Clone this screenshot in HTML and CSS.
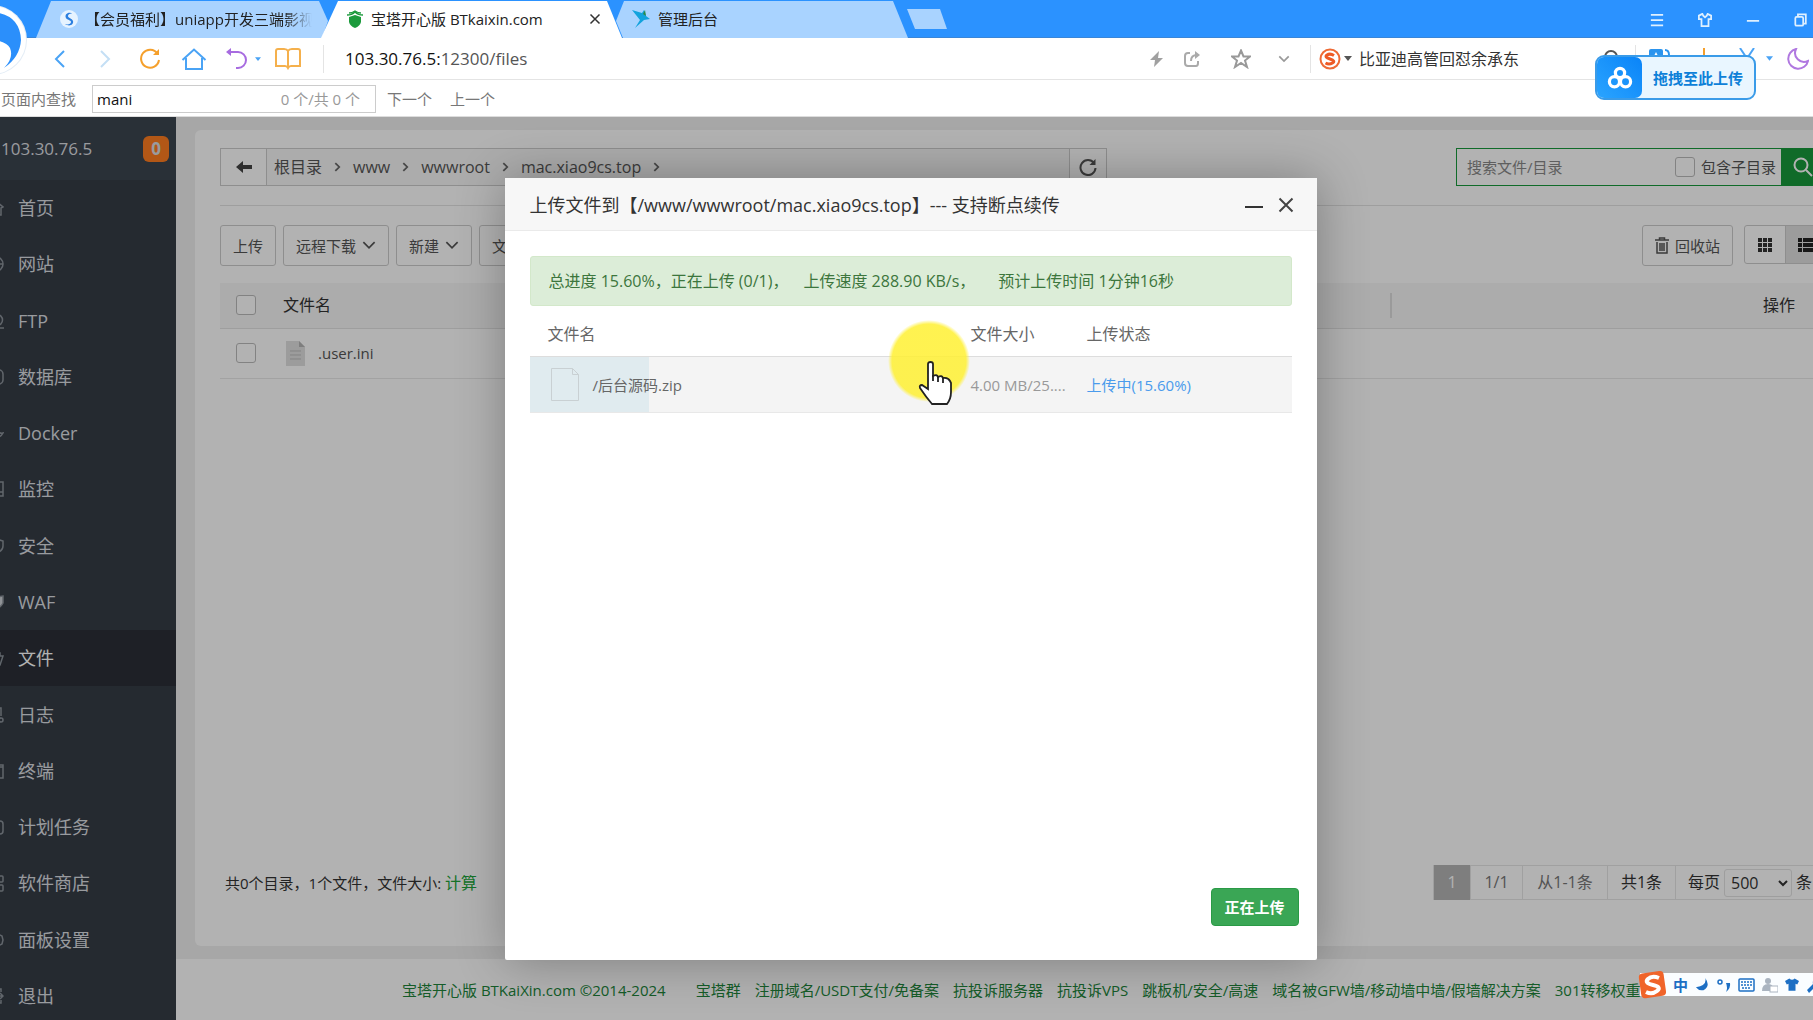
FILE: index.html
```html
<!DOCTYPE html>
<html lang="zh-CN">
<head>
<meta charset="utf-8">
<title>宝塔开心版 BTkaixin.com</title>
<link rel="stylesheet" href="styles.css">
</head>
<body>
<header class="browser">
  <div class="tabs">
    <div class="tab tab-first">
      <svg class="fav" viewBox="0 0 18 18"><circle cx="9" cy="9" r="9" fill="#e6f3ff"/><path d="M13 4C9 1 4 4 6 8c1 2 5 2 5 4s-3 3-6 2c4 3 9 1 8-3-1-3-5-3-5-5 0-2 3-3 5-2z" fill="#2b7fe0"/></svg>
      <span class="tab-title fade">【会员福利】uniapp开发三端影视</span>
    </div>
    <div class="tab tab-active">
      <svg class="fav" viewBox="0 0 18 18"><path d="M3 7l6-2 6 2v5q-1 4-6 6-5-2-6-6z" fill="#1c9a3c"/><path d="M1 5q5 0 8-3 3 3 8 3M3 3q3 0 6-2 3 2 6 2" fill="none" stroke="#1c9a3c" stroke-width="1.3"/></svg>
      <span class="tab-title">宝塔开心版 BTkaixin.com</span>
      <button class="icon-btn" aria-label="关闭标签"><svg width="12" height="12" viewBox="0 0 12 12"><path d="M1.500 1.500l9 9M10.500 1.500l-9 9" stroke="#333" stroke-width="1.500"/></svg></button>
    </div>
    <div class="tab tab-last">
      <svg class="fav wide" viewBox="0 0 20 20"><path d="M1 1l10 3 2-3 2 6 4 3-6 1-9 8 5-8z" fill="#12a3dd"/><path d="M12 5l2-4 1 6z" fill="#2a8a4a"/></svg>
      <span class="tab-title">管理后台</span>
    </div>
    <button class="new-tab" aria-label="新标签"></button>
    <div class="window-tools">
      <svg width="16" height="16" viewBox="0 0 16 16"><path d="M1 2h14M1 8h14M1 14h14"/></svg>
      <svg width="16" height="16" viewBox="0 0 16 16"><path d="M5 1L1 3v4h3v8h8V7h3V3l-4-2-1 2-2 2-2-2z"/></svg>
      <svg width="16" height="16" viewBox="0 0 16 16"><path d="M1 9h14"/></svg>
      <svg width="16" height="16" viewBox="0 0 16 16"><rect x="1.500" y="4.500" width="9" height="10" rx="1.500"/><path d="M4.500 4V1.500h9V12H11"/></svg>
    </div>
  </div>
  <div class="address">
    <div class="nav-icons">
      <svg width="12" height="20" viewBox="0 0 12 20" stroke="#4aa3f5"><path d="M10 2L2 10l8 8"/></svg>
      <svg width="12" height="20" viewBox="0 0 12 20" stroke="#c4dff5"><path d="M2 2l8 8-8 8"/></svg>
      <svg width="22" height="22" viewBox="0 0 22 22" stroke="#f5a02c"><path d="M18.500 5.500A9 9 0 1 0 20 12"/><path d="M20 1v6h-6z" fill="#f5a02c" stroke="none"/></svg>
      <svg width="26" height="22" viewBox="0 0 26 22" stroke="#4aa3f5"><path d="M1.500 12L13 1.500 24.500 12M5 10v11h16V10"/></svg>
      <svg width="22" height="22" viewBox="0 0 22 22" stroke="#a76be0"><path d="M5 4h8a8 8 0 0 1 0 16h-2"/><path d="M1 4l5-4v8z" fill="#a76be0" stroke="none"/></svg>
      <svg width="6" height="4" viewBox="0 0 8 5"><path d="M0 0h8L4 5z" fill="#4aa3f5"/></svg>
      <svg width="26" height="22" viewBox="0 0 26 22" stroke="#f5b04c"><path d="M13 3v17M13 3q-1-2-4-2H3q-2 0-2 2v15h9q2 0 3 2 1-2 3-2h9V3q0-2-2-2h-6q-3 0-4 2z"/></svg>
    </div>
    <div class="url"><span class="host">103.30.76.5:</span>12300/files</div>
    <div class="url-tools">
      <svg width="16" height="16" viewBox="0 0 16 16"><path d="M10 0L1 9h5l-1 7 9-9H9z" fill="#a0a0a0"/></svg>
      <svg width="16" height="16" viewBox="0 0 16 16" stroke="#aaa"><path d="M6 2H4Q1 2 1 5v7q0 3 3 3h8q2 0 2-3v-2M7 10q0-6 6-6"/><path d="M11 0l5 4-5 4z" fill="#aaa" stroke="none"/></svg>
      <svg class="star" width="20" height="20" viewBox="0 0 20 20" stroke="#999"><path d="M10 1.500l2.500 6h6.500l-5 4 2 6.500-6-4-6 4 2-6.500-5-4h6.500z"/></svg>
      <svg width="12" height="8" viewBox="0 0 14 9" stroke="#999"><path d="M1.500 1.500L7 7l5.500-5.500"/></svg>
    </div>
    <div class="search">
      <svg width="22" height="22" viewBox="0 0 22 22" fill="none"><circle cx="11" cy="11" r="9.500" stroke="#ee6a35"/><path d="M15 7.500Q11 5 8 7t3 4 2.500 4T6.500 15" stroke="#ee5a25" class="thick"/></svg>
      <svg width="8" height="5" viewBox="0 0 8 5"><path d="M0 0h8L4 5z" fill="#555"/></svg>
      <input class="search-input" type="text" value="比亚迪高管回怼余承东" aria-label="搜索">
      <svg width="20" height="20" viewBox="0 0 20 20" stroke="#555"><circle cx="8" cy="8" r="6"/><path d="M12 12l6 6"/></svg>
    </div>
    <div class="ext">
      <svg width="24" height="22" viewBox="0 0 24 22"><rect x="1" y="1" width="14" height="14" rx="2" fill="#2b94ee"/><path d="M8 4l-3 6h6z" fill="#fff"/><path d="M17 2q4 0 4 5v8" stroke="#2b94ee"/></svg>
      <svg width="18" height="22" viewBox="0 0 18 22" stroke="#f5a02c"><path d="M9 0v16M3 11l6 6 6-6"/></svg>
      <svg width="18" height="22" viewBox="0 0 18 22" stroke="#4aa3f5"><path d="M2 0l12 18M16 0L4 18"/></svg>
      <svg width="7" height="5" viewBox="0 0 8 5"><path d="M0 0h8L4 5z" fill="#4aa3f5"/></svg>
      <svg width="22" height="22" viewBox="0 0 22 22" stroke="#b078e0"><path d="M9 1A10 10 0 1 0 21 13 9 9 0 0 1 9 1z"/></svg>
    </div>
  </div>
  <div class="find">
    <label class="find-label" for="find-box">页面内查找</label>
    <div class="find-box"><input id="find-box" type="text" value="mani"><span class="find-count">0 个/共 0 个</span></div>
    <button class="find-btn">下一个</button>
    <button class="find-btn">上一个</button>
  </div>
  <svg class="logo" width="28" height="74" viewBox="0 0 28 74"><circle cx="-8" cy="40" r="35" fill="#e4edf6"/><circle cx="-8" cy="40" r="34" fill="#fff"/><path d="M-8 12Q20 14 21 40q-1 17-17 28Q14 58 10 48 6 41 -8 40z" fill="#2b8ffb"/></svg>
  <div class="drop-upload">
    <span class="drop-icon"><svg width="26" height="24" viewBox="0 0 28 26" fill="none" stroke="#fff" stroke-width="3.500"><circle cx="14" cy="7.500" r="5"/><circle cx="8" cy="17" r="5.500"/><circle cx="20" cy="17" r="5.500"/></svg></span>
    <span class="drop-text">拖拽至此上传</span>
  </div>
</header>

<div class="app">
  <div class="layout">
    <aside class="sidebar">
      <div class="side-head"><span>103.30.76.5</span><b class="badge">0</b></div>
      <nav class="menu">
        <a href="#"><svg viewBox="0 0 16 16"><path d="M1 7l7-6 7 6-2 1v7H3V8"/></svg>首页</a>
        <a href="#"><svg viewBox="0 0 16 16"><circle cx="8" cy="8" r="7"/><path d="M1 8h14"/></svg>网站</a>
        <a href="#"><svg viewBox="0 0 16 16"><circle cx="9" cy="7" r="5.500"/><path d="M2 15h14"/></svg>FTP</a>
        <a href="#"><svg viewBox="0 0 16 16"><rect x="2" y="1" width="13" height="14" rx="4"/><path d="M11 3v11"/></svg>数据库</a>
        <a href="#"><svg viewBox="0 0 16 16"><path d="M10 5q1 4 5 3-2 4-6 4"/></svg>Docker</a>
        <a href="#"><svg viewBox="0 0 16 16"><path d="M1 1h14v14H1M15 11H9"/></svg>监控</a>
        <a href="#"><svg viewBox="0 0 16 16"><path d="M8 1l7 2v5q0 5-7 7-7-2-7-7V3z"/></svg>安全</a>
        <a href="#"><svg viewBox="0 0 16 16"><path d="M8 3l7-1v7q-2 4-7 6z" fill="#cfd3d8"/></svg>WAF</a>
        <a href="#" class="on"><svg viewBox="0 0 16 16"><path d="M1 3h11v3h3l-3 9H1"/></svg>文件</a>
        <a href="#"><svg viewBox="0 0 16 16"><path d="M2 1h11v8M2 15h8"/><circle cx="13" cy="13" r="2"/></svg>日志</a>
        <a href="#"><svg viewBox="0 0 16 16"><path d="M1 2h14v13H1M1 4h14"/></svg>终端</a>
        <a href="#"><svg viewBox="0 0 16 16"><rect x="1" y="2" width="14" height="13" rx="3"/></svg>计划任务</a>
        <a href="#"><svg viewBox="0 0 16 16"><rect x="9" y="1" width="6" height="6" rx="1"/><rect x="9" y="10" width="6" height="6" rx="1"/></svg>软件商店</a>
        <a href="#"><svg viewBox="0 0 16 16"><path d="M8 1l6 3 1 4-1 4-6 3-6-3V4z"/></svg>面板设置</a>
        <a href="#"><svg viewBox="0 0 16 16"><path d="M8 1h5v3M8 15h5v-3M6 8h9M12 5l3 3-3 3"/></svg>退出</a>
      </nav>
    </aside>
    <main class="main">
      <section class="card">
        <div class="path-row">
          <div class="path">
            <button class="path-btn back" aria-label="返回"><svg width="16" height="14" viewBox="0 0 16 14"><path d="M0 7l7-6v4h9v4H7v4z" fill="#444"/></svg></button>
            <div class="crumbs">
              <a href="#">根目录</a><svg viewBox="0 0 8 12"><path d="M1.500 1.500L6 6l-4.500 4.500"/></svg>
              <a href="#">www</a><svg viewBox="0 0 8 12"><path d="M1.500 1.500L6 6l-4.500 4.500"/></svg>
              <a href="#">wwwroot</a><svg viewBox="0 0 8 12"><path d="M1.500 1.500L6 6l-4.500 4.500"/></svg>
              <a href="#">mac.xiao9cs.top</a><svg viewBox="0 0 8 12"><path d="M1.500 1.500L6 6l-4.500 4.500"/></svg>
            </div>
            <button class="path-btn reload" aria-label="刷新"><svg width="18" height="18" viewBox="0 0 18 18" fill="none"><path d="M15 5a7.500 7.500 0 1 0 1.500 5" stroke="#555" stroke-width="2"/><path d="M16.500 1v6h-6z" fill="#555"/></svg></button>
          </div>
          <div class="file-search">
            <input type="text" placeholder="搜索文件/目录" aria-label="搜索文件/目录">
            <label><input type="checkbox" class="box">包含子目录</label>
            <button aria-label="搜索"><svg width="20" height="20" viewBox="0 0 20 20" fill="none" stroke="#fff" stroke-width="2"><circle cx="8" cy="8" r="6.500"/><path d="M13 13l6 6"/></svg></button>
          </div>
        </div>
        <div class="tools">
          <button class="btn">上传</button>
          <button class="btn">远程下载<svg width="14" height="9" viewBox="0 0 12 8"><path d="M1 1l5 5 5-5"/></svg></button>
          <button class="btn">新建<svg width="14" height="9" viewBox="0 0 12 8"><path d="M1 1l5 5 5-5"/></svg></button>
          <button class="btn">文件操作</button>
          <button class="btn bin"><svg width="14" height="17" viewBox="0 0 14 17"><path d="M0 3h14M4.500 3V1h5v2M2 5v11h10V5M5 6v8M7 6v8M9 6v8"/></svg>回收站</button>
          <div class="views">
            <button aria-label="图标"><svg width="14" height="14" viewBox="0 0 14 14" fill="#333"><path d="M0 0h4v4H0zM5 0h4v4H5zM10 0h4v4h-4zM0 5h4v4H0zM5 5h4v4H5zM10 5h4v4h-4zM0 10h4v4H0zM5 10h4v4H5zM10 10h4v4h-4z"/></svg></button>
            <button class="on" aria-label="列表"><svg width="16" height="14" viewBox="0 0 16 14" fill="#222"><path d="M0 0h4v4H0zM5 0h11v4H5zM0 5h4v4H0zM5 5h11v4H5zM0 10h4v4H0zM5 10h11v4H5z"/></svg></button>
          </div>
        </div>
        <table class="files">
          <thead><tr><th class="c-check"><input type="checkbox" class="box" aria-label="全选"></th><th>文件名</th><th class="c-op"><span>操作</span></th></tr></thead>
          <tbody><tr><td class="c-check"><input type="checkbox" class="box" aria-label="选择 .user.ini"></td><td><span class="file"><svg width="19" height="25" viewBox="0 0 19 25"><path d="M0 0h13l6 6v19H0z" fill="#e0e0e0"/><path d="M13 0l6 6h-6z" fill="#b5b5b5"/><path d="M4 10h11M4 14h11M4 18h11" stroke="#bbb"/></svg>.user.ini</span></td><td></td></tr></tbody>
        </table>
        <div class="card-foot">
          <p>共0个目录，1个文件，文件大小: <a href="#">计算</a></p>
          <div class="pager">
            <span class="cur">1</span><span>1/1</span><span>从1-1条</span><span class="dark">共1条</span>
            <label class="dark">每页<select><option>500</option></select>条</label>
          </div>
        </div>
      </section>
      <footer class="foot">
        <a href="#" class="copy">宝塔开心版 BTKaiXin.com ©2014-2024</a>
        <a href="#">宝塔群</a><a href="#">注册域名/USDT支付/免备案</a><a href="#">抗投诉服务器</a><a href="#">抗投诉VPS</a><a href="#">跳板机/安全/高速</a><a href="#">域名被GFW墙/移动墙中墙/假墙解决方案</a><a href="#">301转移权重</a>
      </footer>
    </main>
  </div>

  <div class="shade">
    <section class="dialog" role="dialog" aria-label="上传文件">
      <header class="dialog-head">
        <h2>上传文件到【/www/wwwroot/mac.xiao9cs.top】--- 支持断点续传</h2>
        <button class="icon-btn" aria-label="最小化"><svg width="18" height="16" viewBox="0 0 18 16"><path d="M0 10h18" stroke="#333" stroke-width="2"/></svg></button>
        <button class="icon-btn" aria-label="关闭"><svg width="16" height="16" viewBox="0 0 16 16"><path d="M1.500 1.500l13 13M14.500 1.500l-13 13" stroke="#444" stroke-width="2"/></svg></button>
      </header>
      <div class="dialog-body">
        <div class="notice"><span>总进度 15.60%，正在上传 (0/1)，</span><span>上传速度 288.90 KB/s，</span><span>预计上传时间 1分钟16秒</span></div>
        <table class="queue">
          <thead><tr><th>文件名</th><th class="q-size">文件大小</th><th class="q-state">上传状态</th></tr></thead>
          <tbody><tr class="uploading" style="--done: 15.6%"><td><span class="q-file"><svg width="28" height="33" viewBox="0 0 28 33" fill="none" stroke="#c9d0d3"><path d="M.5.5h21l6 6v26H.5zM21.500.5v6h6"/></svg>/后台源码.zip</span></td><td class="q-size">4.00 MB/25....</td><td class="q-state">上传中(15.60%)</td></tr></tbody>
        </table>
      </div>
      <footer class="dialog-foot"><button class="primary">正在上传</button></footer>
    </section>
  </div>
</div>

<div class="pointer"><svg width="34" height="44" viewBox="0 0 34 44"><path d="M10 3q0-2 2.500-2T15 3v12q4-2 5 1 4-2 5 1 5-1 7 3l1 2v9q0 7-4 12H14Q8 36 2 27q-1-3 2-3l6 4z" fill="#fff" stroke="#222" stroke-width="1.800"/><path d="M15 14v6M20 15v6M25 16v6" stroke="#222" stroke-width="1.800"/></svg></div>

<div class="ime">
  <svg class="ime-logo" width="30" height="30" viewBox="0 0 30 30"><rect x="2" y="2" width="25" height="25" rx="4" fill="#f0642a" transform="rotate(-8 15 15)"/><path d="M21 8Q14 5 10 9t5 6 4 6-11 1" fill="none" stroke="#fff" stroke-width="4"/></svg>
  <b>中</b>
  <svg width="15" height="15" viewBox="0 0 16 16"><path d="M11 1q2 8-10 10 3 4 8 3 8-4 2-13z" fill="#1d6fc4"/></svg>
  <svg width="14" height="16" viewBox="0 0 14 16"><circle cx="3" cy="5" r="2" fill="none" stroke="#1d6fc4" stroke-width="1.500"/><path d="M9 6h4q1 5-4 9 2-4 0-9z" fill="#1d6fc4"/></svg>
  <svg width="17" height="14" viewBox="0 0 17 14"><rect x="1" y="1" width="15" height="12" rx="1" fill="none" stroke="#1d6fc4" stroke-width="1.500"/><path d="M3 4h11M3 7h11M4 10h9" stroke="#1d6fc4" stroke-width="1.600" stroke-dasharray="2 1"/></svg>
  <svg width="16" height="16" viewBox="0 0 16 16"><circle cx="6" cy="4" r="3" fill="#aab4c0"/><path d="M0 14q0-7 6-7 4 0 5 3v4z" fill="#aab4c0"/><rect x="8" y="9" width="8" height="6" fill="#fff" stroke="#aab4c0"/></svg>
  <svg width="14" height="15" viewBox="0 0 16 16"><path d="M5 1L0 4l2 4 2-1v8h8V7l2 1 2-4-5-3q-3 3-6 0z" fill="#1d6fc4"/></svg>
  <svg width="16" height="16" viewBox="0 0 16 16"><path d="M1 13l6-6q-1-4 3-6l1 1-1 3 2 2 3-2q1 6-6 5l-6 6z" fill="#1d6fc4"/></svg>
</div>
</body>
</html>
```
FILE: styles.css
```css
* { box-sizing: border-box; }
body {
  margin: 0;
  height: 100vh;
  display: flex;
  flex-direction: column;
  overflow: hidden;
  position: relative;
  font: 15px/20px "Open Sans", "Noto Sans CJK SC", sans-serif;
  color: #333;
}
button, input, select { font: inherit; color: inherit; margin: 0; }
button { padding: 0; border: 0; background: none; white-space: nowrap; }
a { color: inherit; text-decoration: none; }
svg { flex: none; display: block; }
h2, p { margin: 0; }
.icon-btn { display: flex; align-items: center; }

/* browser chrome */
.browser { position: relative; flex: none; background: #fff; border-bottom: 1px solid #ddd; }
.tabs {
  display: flex;
  align-items: flex-end;
  height: 38px;
  padding-left: 36px;
  background: #2b92ff;
  box-shadow: inset 0 -1px #3a86d8;
}
.tab { display: flex; align-items: center; height: 37px; padding-bottom: 2px; background: #a9d3ff; color: #222; }
.tab-title { white-space: nowrap; overflow: hidden; }
.fav { width: 18px; height: 18px; margin-right: 7px; }
.fav.wide { width: 20px; height: 20px; }
.tab-first { width: 292px; padding-left: 24px; padding-right: 16px; clip-path: polygon(15px 0, 283px 0, 292px 20px, 286px 100%, 0 100%); }
.fade { mask-image: linear-gradient(90deg, #000 88%, transparent); }
.tab-active {
  width: 301px;
  margin-left: -7px;
  padding-left: 25px;
  padding-right: 21px;
  background: #fff;
  clip-path: polygon(17px 0, 286px 0, 100% 100%, 0 100%);
}
.tab-active .icon-btn { margin-left: auto; }
.tab-last { width: 292px; margin-left: -6px; padding-left: 15px; clip-path: polygon(8px 0, 277px 0, 100% 100%, 7px 100%, 0 20px); }
.new-tab { width: 40px; height: 20px; margin: 0 0 9px -1px; background: #a9d3ff; clip-path: polygon(0 0, 33px 0, 100% 100%, 8px 100%); }
.window-tools { display: flex; align-items: center; gap: 32px; margin-left: auto; padding-right: 4px; height: 37px; }
.window-tools svg { fill: none; stroke: #dff0ff; stroke-width: 2; width: 16px; height: 14px; }
.address { display: flex; align-items: center; height: 42px; border-bottom: 1px solid #e4e4e4; padding-right: 4px; }
.address svg { fill: none; stroke-width: 2; }
.address .thick { stroke-width: 3; }
.nav-icons { display: flex; align-items: center; width: 324px; height: 28px; padding-left: 54px; border-right: 1px solid #e4e4e4; gap: 18px; }
.nav-icons svg:nth-child(1) { margin-right: -1px; }
.nav-icons svg:nth-child(2) { margin: 0 10px 0 16px; }
.nav-icons svg:nth-child(4) { margin-left: 2px; }
.nav-icons svg:nth-child(6) { margin: 0 -4px 0 -10px; }
.url { flex: 1; padding-left: 21px; font-size: 17px; color: #555; }
.host { color: #111; }
.url-tools { display: flex; align-items: center; width: 162px; height: 28px; gap: 19px; border-right: 1px solid #e4e4e4; }
.star { margin: 0 8px 0 12px; }
.search { display: flex; align-items: center; width: 325px; height: 28px; padding: 0 12px 0 8px; gap: 3px; border-right: 1px solid #e4e4e4; }
.search-input { flex: 1; min-width: 0; border: 0; outline: 0; background: none; padding: 0 0 0 4px; font-size: 16px; }
.ext { display: flex; align-items: center; padding-left: 12px; gap: 16px; }
.ext svg:nth-child(1) { margin-right: 7px; }
.ext svg:nth-child(2) { margin-right: 9px; }
.ext svg:nth-child(3) { margin-right: -6px; }
.ext svg:nth-child(4) { margin-right: -2px; }
.find { display: flex; align-items: center; height: 36px; padding-top: 2px; color: #777; }
.find-label { display: flex; justify-content: flex-end; width: 92px; padding-right: 16px; white-space: nowrap; }
.find-box { display: flex; align-items: center; width: 284px; height: 28px; border: 1px solid #ccc; padding: 0 15px 0 4px; }
.find-box input { flex: 1; min-width: 0; border: 0; outline: 0; padding: 0; color: #111; }
.find-count { color: #999; white-space: nowrap; }
.find-btn { margin-left: 11px; }
.find-btn + .find-btn { margin-left: 18px; }
.logo { position: absolute; left: 0; top: 0; }
.drop-upload {
  position: absolute;
  right: 57px;
  top: 55px;
  display: flex;
  width: 161px;
  height: 45px;
  border: 2px solid #3a9be8;
  border-radius: 9px;
  background: #e9f6ff;
  overflow: hidden;
}
.drop-icon { display: flex; align-items: center; justify-content: center; width: 45px; background: linear-gradient(45deg, #2aa4ff, #0a84f8); border-radius: 0 7px 7px 0; }
.drop-text { flex: 1; align-self: center; text-align: center; font-weight: 700; color: #0d80d8; white-space: nowrap; }

/* panel */
.app { position: relative; flex: 1; min-height: 0; overflow: hidden; }
.layout { display: flex; width: calc(100% + 52px); height: 100%; background: #f0f0f0; }
.sidebar { display: flex; flex-direction: column; width: 176px; flex: none; background: #363d46; color: #dcdfe2; }
.side-head { display: flex; align-items: center; justify-content: space-between; height: 63px; padding: 0 7px 0 1px; background: #3c454f; font-size: 17px; }
.badge { width: 26px; height: 26px; border-radius: 6px; background: #ff7d20; text-align: center; line-height: 25px; }
.menu { flex: 1; display: grid; grid-auto-rows: 1fr; margin-bottom: -4px; font-size: 18px; }
.menu a { display: flex; align-items: center; gap: 14px; }
.menu svg { width: 16px; height: 18px; margin-left: -12px; fill: none; stroke: #8c939b; stroke-width: 1.5; }
.menu .on { background: #2b2f37; color: #fff; }
.main { flex: 1; min-width: 0; display: flex; flex-direction: column; }
.card {
  flex: 1;
  display: flex;
  flex-direction: column;
  margin: 13px 14px 13px 19px;
  padding: 18px 25px 46px;
  background: #fff;
  border-radius: 6px;
}
.path-row { display: flex; justify-content: space-between; padding-bottom: 19px; border-bottom: 1px solid #e2e2e2; }
.path { display: flex; flex: 0 1 887px; height: 38px; border: 1px solid #ccc; color: #555; }
.path-btn { display: flex; align-items: center; justify-content: center; }
.back { width: 46px; border-right: 1px solid #ccc; }
.reload { width: 37px; border-left: 1px solid #ccc; }
.crumbs { flex: 1; display: flex; align-items: center; gap: 12px; padding-left: 7px; background: #f6f6f6; font-size: 16px; }
.crumbs svg { width: 7px; height: 12px; fill: none; stroke: #666; stroke-width: 2; }
.file-search { display: flex; width: 370px; height: 38px; border: 1px solid #179a3b; }
.file-search > input { flex: 1; min-width: 0; border: 0; background: none; padding: 0 0 0 10px; }
.file-search ::placeholder { color: #888; }
.file-search label { display: flex; align-items: center; gap: 6px; padding-right: 5px; color: #555; }
.file-search button { width: 44px; display: flex; align-items: center; justify-content: center; background: #179a3b; }
.box { appearance: none; width: 20px; height: 20px; border: 1px solid #bbb; border-radius: 3px; background: #fff; display: block; }
.tools { display: flex; gap: 7px; padding: 19px 0 17px; align-items: flex-start; }
.btn { display: flex; align-items: center; gap: 6px; height: 41px; padding: 0 12px; border: 1px solid #ccc; border-radius: 3px; color: #555; }
.btn svg { fill: none; stroke: #555; stroke-width: 1.5; }
.bin { margin-left: auto; }
.views { display: flex; margin-left: 4px; height: 39px; border: 1px solid #ccc; border-radius: 3px; }
.views button { width: 40px; display: flex; align-items: center; justify-content: center; }
.views .on { background: #e0e0e0; border-left: 1px solid #ccc; }
.files { width: 100%; border-collapse: collapse; text-align: left; table-layout: fixed; }
.files th { height: 45px; padding: 0; background: #f6f6f6; font-weight: 400; font-size: 16px; border-bottom: 1px solid #e2e2e2; }
.files td { height: 50px; padding: 0; border-bottom: 1px solid #e8e8e8; color: #555; }
.files .c-check { width: 63px; padding-left: 16px; }
.c-op { width: 436px; text-align: right; }
.c-op span { display: block; padding-right: 31px; line-height: 25px; border-left: 2px solid #ddd; }
.file { display: flex; align-items: center; gap: 13px; padding-left: 3px; }
.card-foot { display: flex; justify-content: space-between; align-items: center; margin-top: auto; padding-left: 5px; }
.card-foot p a { font-size: 16px; color: #20a53a; }
.pager { display: flex; height: 35px; border: 1px solid #e6e6e6; border-width: 1px 0; font-size: 16px; color: #777; line-height: 33px; }
.pager > * { border-left: 1px solid #e6e6e6; text-align: center; white-space: nowrap; }
.pager span:nth-child(1) { width: 37px; margin: -1px 0; line-height: 35px; }
.pager span:nth-child(2) { width: 52px; }
.pager span:nth-child(3) { width: 85px; }
.pager span:nth-child(4) { width: 68px; }
.pager .cur { background: #b5b5b5; color: #fff; }
.pager .dark { color: #333; }
.pager label { display: flex; align-items: center; gap: 4px; width: 151px; padding-left: 12px; }
.pager select { width: 68px; height: 28px; border: 1px solid #e2e2e2; border-radius: 3px; background: transparent; padding: 0 0 0 2px; }
.foot { display: flex; gap: 14px; height: 61px; align-items: center; padding-left: 226px; background: #fff; color: #20853a; white-space: nowrap; }
.copy { margin-right: 16px; }

/* upload dialog */
.shade { position: absolute; inset: 0; display: flex; align-items: center; justify-content: center; padding-left: 8px; background: rgba(0, 0, 0, .3); }
.dialog { display: flex; flex-direction: column; width: 812px; height: 782px; background: #fff; border-radius: 2px; box-shadow: 1px 1px 50px rgba(0, 0, 0, .3); }
.dialog-head { display: flex; align-items: center; gap: 15px; height: 53px; padding: 2px 23px 0 25px; background: #f7f7f7; border-bottom: 1px solid #eaeaea; }
.dialog-head h2 { flex: 1; font-size: 18px; font-weight: 400; white-space: nowrap; }
.dialog-body { flex: 1; padding: 25px 25px 0; }
.notice { display: flex; height: 50px; align-items: center; padding-left: 18px; gap: 15px; background: #dcedd8; border: 1px solid #d3e8ca; border-radius: 3px; color: #3c763d; font-size: 16px; white-space: nowrap; }
.notice span:last-child { margin-left: 8px; }
.queue { width: 100%; border-collapse: collapse; table-layout: fixed; text-align: left; color: #666; }
.queue th { height: 51px; padding: 6px 0 0; font-weight: 400; font-size: 16px; border-bottom: 1px solid #ddd; }
.queue td { height: 56px; padding: 0; border-bottom: 1px solid #e8e8e8; }
.queue th:first-child { padding-left: 18px; }
.uploading { background: linear-gradient(90deg, #e0ebef var(--done), #f4f4f4 var(--done)); }
.queue .q-size { width: 116px; white-space: nowrap; }
.queue .q-state { width: 205px; }
td.q-size { color: #999; }
td.q-state { color: #4a9bec; }
.q-file { display: flex; align-items: center; gap: 14px; padding-left: 21px; }
.dialog-foot { display: flex; justify-content: flex-end; padding: 0 18px 34px; }
.primary { width: 88px; height: 38px; border: 1px solid #2a9a46; border-radius: 4px; background: #3aa655; color: #fff; font-weight: 700; }

/* mouse highlight and input-method bar float over everything */
.pointer { position: absolute; left: 888px; top: 320px; width: 82px; height: 82px; border-radius: 50%; background: radial-gradient(closest-side, rgba(255, 240, 50, .85) 90%, transparent); padding: 41px 0 0 30px; }
.ime { position: absolute; right: 0; bottom: 24px; display: flex; align-items: center; gap: 7px; width: 173px; height: 23px; background: #fafdff; color: #1d6fc4; overflow: visible; }
.ime > * { flex: none; }
.ime-logo { margin: 0 -2px 0 -2px; }
```
